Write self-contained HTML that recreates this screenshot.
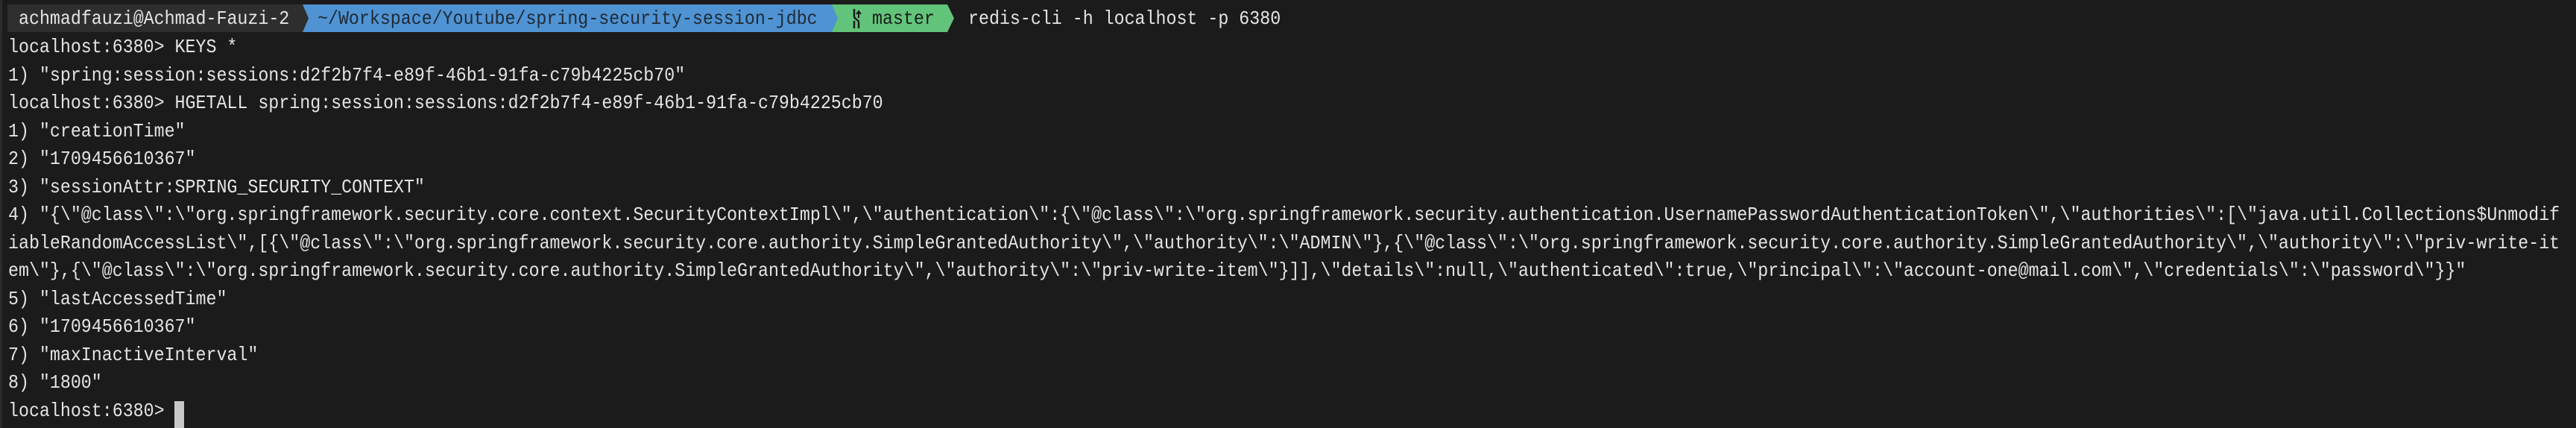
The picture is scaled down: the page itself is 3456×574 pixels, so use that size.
<!DOCTYPE html>
<html><head><meta charset="utf-8"><style>
html,body{margin:0;padding:0;background:#1b1b1b;width:3456px;height:574px;overflow:hidden}
.b{position:absolute;left:0;top:0;width:3px;height:574px;background:#2b2b2b}
.t{font-family:"Liberation Mono","DejaVu Sans Mono",monospace;font-size:26px;color:#e4e4e4;white-space:pre;transform:scaleX(0.8955);transform-origin:0 0;position:absolute}
.seg{position:absolute;top:6px;height:37px}
.cur{position:absolute;left:234px;top:538px;width:13px;height:36px;background:#c8c8c8}
</style></head><body>
<div class="b"></div>
<div class="seg" style="left:10px;width:400px;background:#2e2e2e"></div>
<div class="seg" style="left:402px;width:713px;background:#4f93d3"></div>
<svg style="position:absolute;left:400px;top:6px" width="20" height="37"><polygon points="0,0 6,0 14,18.5 6,37 0,37" fill="#2e2e2e"/></svg>
<div class="seg" style="left:1115px;width:156px;background:#62c47a"></div>
<svg style="position:absolute;left:1113px;top:6px" width="20" height="37"><polygon points="0,0 3,0 11,18.5 3,37 0,37" fill="#4f93d3"/></svg>
<svg style="position:absolute;left:1270px;top:6px" width="20" height="37"><polygon points="0,0 1,0 10,18.5 1,37 0,37" fill="#62c47a"/></svg>
<svg style="position:absolute;left:1142px;top:12px" width="14" height="26"><path d="M4 0 V10 C4 14 10 14 10 18 V26" stroke="#1b1b1b" stroke-width="2.5" fill="none"/><path d="M10 4 V12 M7 7 L10 3 L13 7" stroke="#1b1b1b" stroke-width="2" fill="none"/><path d="M4 16 V26" stroke="#1b1b1b" stroke-width="2.5"/></svg>
<div class="t" style="left:25px;top:8px;line-height:34px">achmadfauzi@Achmad-Fauzi-2</div>
<div class="t" style="left:426px;top:8px;line-height:34px;color:#1f2a36">~/Workspace/Youtube/spring-security-session-jdbc</div>
<div class="t" style="left:1170px;top:8px;line-height:34px;color:#1b1b1b">master</div>
<div class="t" style="left:1299px;top:8px;line-height:34px">redis-cli -h localhost -p 6380</div>
<div class="t" style="left:11px;top:45px;line-height:37.5px">localhost:6380&gt; KEYS *
1) "spring:session:sessions:d2f2b7f4-e89f-46b1-91fa-c79b4225cb70"
localhost:6380&gt; HGETALL spring:session:sessions:d2f2b7f4-e89f-46b1-91fa-c79b4225cb70
1) "creationTime"
2) "1709456610367"
3) "sessionAttr:SPRING_SECURITY_CONTEXT"
4) "{\"@class\":\"org.springframework.security.core.context.SecurityContextImpl\",\"authentication\":{\"@class\":\"org.springframework.security.authentication.UsernamePasswordAuthenticationToken\",\"authorities\":[\"java.util.Collections$Unmodif
iableRandomAccessList\",[{\"@class\":\"org.springframework.security.core.authority.SimpleGrantedAuthority\",\"authority\":\"ADMIN\"},{\"@class\":\"org.springframework.security.core.authority.SimpleGrantedAuthority\",\"authority\":\"priv-write-it
em\"},{\"@class\":\"org.springframework.security.core.authority.SimpleGrantedAuthority\",\"authority\":\"priv-write-item\"}]],\"details\":null,\"authenticated\":true,\"principal\":\"account-one@mail.com\",\"credentials\":\"password\"}}"
5) "lastAccessedTime"
6) "1709456610367"
7) "maxInactiveInterval"
8) "1800"
localhost:6380&gt; </div>
<div class="cur"></div>
</body></html>
